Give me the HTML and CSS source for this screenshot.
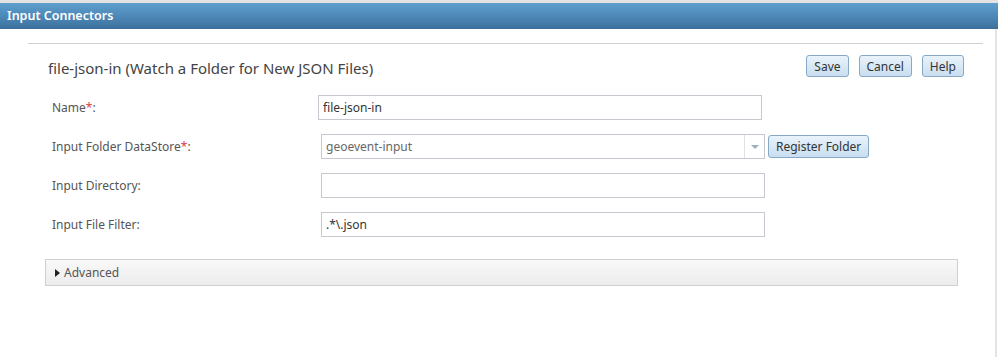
FILE: index.html
```html
<!DOCTYPE html>
<html lang="en">
<head>
    <meta charset="UTF-8">
    <title>Input Connectors</title>
    <link rel="stylesheet" href="styles.css">
</head>
<body>
    <div class="page">
        <div class="titlebar">Input Connectors</div>
        <div class="content">
            <div class="panel">
                <div class="panel-head">
                    <h2>file-json-in (Watch a Folder for New JSON Files)</h2>
                    <div class="actions">
                        <button class="btn">Save</button>
                        <button class="btn">Cancel</button>
                        <button class="btn">Help</button>
                    </div>
                </div>
                <div class="form">
                    <div class="form-row">
                        <label>Name<span class="req">*</span>:</label>
                        <input class="field field-name" type="text" value="file-json-in">
                    </div>
                    <div class="form-row">
                        <label>Input Folder DataStore<span class="req">*</span>:</label>
                        <div class="combo">
                            <span class="combo-text">geoevent-input</span>
                            <span class="combo-arrow"></span>
                        </div>
                        <button class="btn btn-register">Register Folder</button>
                    </div>
                    <div class="form-row">
                        <label>Input Directory:</label>
                        <input class="field" type="text" value="">
                    </div>
                    <div class="form-row">
                        <label>Input File Filter:</label>
                        <input class="field" type="text" value=".*\.json">
                    </div>
                </div>
                <div class="advanced"><span class="tri"></span>Advanced</div>
            </div>
        </div>
    </div>
</body>
</html>
```

FILE: styles.css
```css
body {
    margin: 0;
    font-family: "Noto Sans", "DejaVu Sans", sans-serif;
    color: #555;
    background: #fff;
}

.page {
    height: 357px;
    border-top: 3px solid #e3e3e3;
    box-sizing: border-box;
    overflow: hidden;
}

.titlebar {
    height: 26px;
    line-height: 26px;
    padding-left: 7px;
    color: #fff;
    font-size: 12.5px;
    font-weight: 600;
    background: linear-gradient(#5d9fcd, #4a84b3 60%, #3c6f9b);
}

.content {
    padding: 14px 0 0 28px;
    border-right: 2px solid #e4e4e4;
    margin-right: 1px;
    height: 331px;
    box-sizing: border-box;
}

.panel {
    width: 955px;
    border-top: 1px solid #cfcfcf;
}

.panel-head {
    display: flex;
    align-items: center;
    justify-content: space-between;
    padding: 4px 20px 0 20px;
    height: 36px;
}

.panel-head h2 {
    margin: 4px 0 0 0;
    font-size: 15px;
    font-weight: normal;
    color: #444;
}

.actions {
    display: flex;
    gap: 10px;
    margin-right: -1px;
}

.btn {
    font-family: inherit;
    font-size: 12px;
    color: #333;
    height: 22px;
    padding: 0 7px;
    border: 1px solid #86a9c8;
    border-radius: 3px;
    background: linear-gradient(#e9f3fb, #c9def0);
    cursor: pointer;
}

.form {
    padding: 4px 0 0 24px;
}

.form-row {
    display: flex;
    align-items: center;
    height: 39px;
}

.form-row label {
    width: 266px;
    font-size: 12px;
}

.req {
    color: #e03a3a;
}

.field {
    font-family: inherit;
    font-size: 12px;
    color: #333;
    width: 444px;
    height: 25px;
    box-sizing: border-box;
    margin-left: 3px;
    padding: 0 4px;
    border: 1px solid #c6c9cf;
    outline: none;
}

.field-name {
    margin-left: 0;
}

.combo {
    display: flex;
    align-items: center;
    width: 444px;
    height: 25px;
    box-sizing: border-box;
    margin-left: 3px;
    border: 1px solid #c6c9cf;
    font-size: 12px;
    color: #666;
}

.combo-text {
    flex: 1;
    padding-left: 4px;
}

.combo-arrow {
    width: 19px;
    height: 23px;
    border-left: 1px solid #e2e2e2;
    position: relative;
}

.combo-arrow::after {
    content: "";
    position: absolute;
    left: 6px;
    top: 10px;
    border-left: 4px solid transparent;
    border-right: 4px solid transparent;
    border-top: 4px solid #9fb0c2;
}

.btn-register {
    margin-left: 3px;
    height: 23px;
}

.advanced {
    margin: 15px 0 0 17px;
    width: 913px;
    height: 27px;
    box-sizing: border-box;
    border: 1px solid #cdd0d4;
    background: linear-gradient(#f9f9f9, #ececec);
    font-size: 12px;
    color: #555;
    display: flex;
    align-items: center;
    padding-left: 9px;
}

.tri {
    width: 0;
    height: 0;
    border-top: 4px solid transparent;
    border-bottom: 4px solid transparent;
    border-left: 5px solid #222;
    margin-right: 4px;
}
```
